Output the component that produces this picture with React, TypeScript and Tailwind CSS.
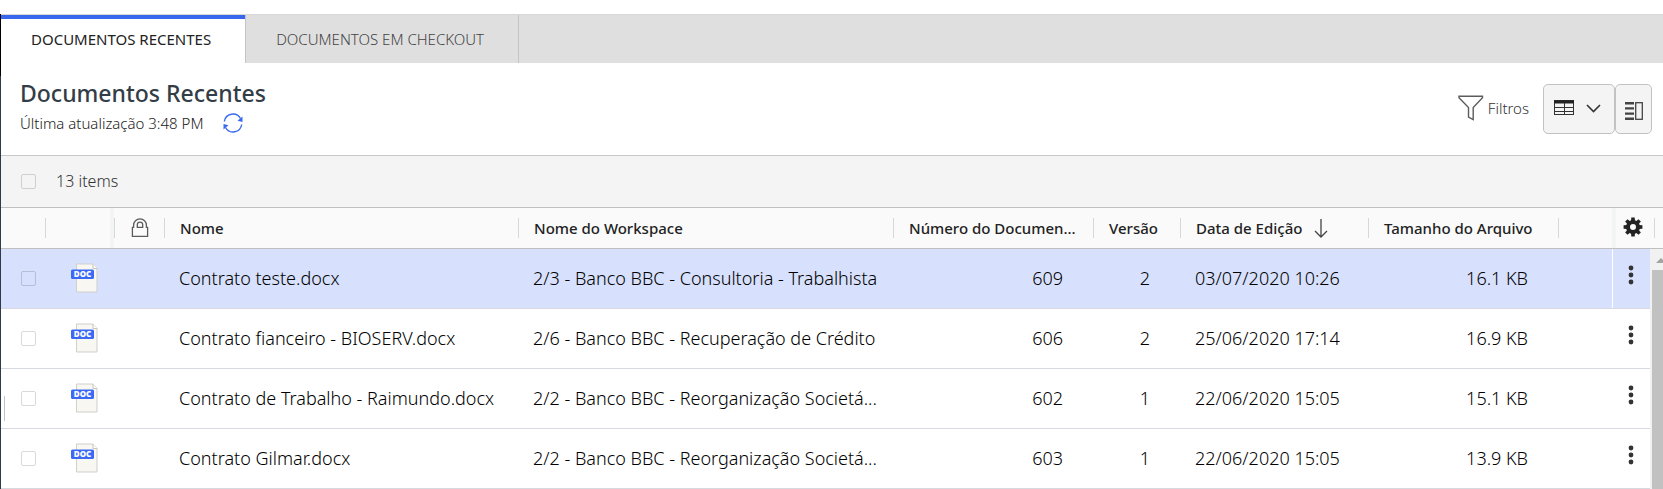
import type { ReactNode } from 'react';

const rows = [
  { name: 'Contrato teste.docx', workspace: '2/3 - Banco BBC - Consultoria - Trabalhista', number: 609, version: 2, edited: '03/07/2020 10:26', size: '16.1 KB', selected: true },
  { name: 'Contrato fianceiro - BIOSERV.docx', workspace: '2/6 - Banco BBC - Recuperação de Crédito', number: 606, version: 2, edited: '25/06/2020 17:14', size: '16.9 KB', selected: false },
  { name: 'Contrato de Trabalho - Raimundo.docx', workspace: '2/2 - Banco BBC - Reorganização Societá...', number: 602, version: 1, edited: '22/06/2020 15:05', size: '15.1 KB', selected: false },
  { name: 'Contrato Gilmar.docx', workspace: '2/2 - Banco BBC - Reorganização Societá...', number: 603, version: 1, edited: '22/06/2020 15:05', size: '13.9 KB', selected: false },
];

function Checkbox({ label }: { label: string }) {
  return (
    <input
      type="checkbox"
      aria-label={label}
      className="block size-[15px] appearance-none rounded-xs border border-black/15 checked:bg-[#3867ee]"
    />
  );
}

function RefreshIcon() {
  return (
    <svg width="20" height="20" viewBox="0 0 20 20" fill="none" stroke="#3b69f0" strokeWidth="1.4">
      <path d="M1.300 8.500A8.700 8.700 0 0 1 17.500 5.500" />
      <path d="M18.700 11.500A8.700 8.700 0 0 1 2.500 14.500" />
      <path d="M19.500 3.500V9L14.500 7.800Z" fill="#3b69f0" stroke="none" />
      <path d="M0.500 16.500V11L5.500 12.200Z" fill="#3b69f0" stroke="none" />
    </svg>
  );
}

function FilterIcon() {
  return (
    <svg width="26" height="26" viewBox="0 0 26 26" fill="none" stroke="#5c5c5c" strokeWidth="1.4">
      <path d="M1 1.200H24.500V2.700L15.200 12.500V24.600L10.500 22V12.500L1 2.700Z" />
    </svg>
  );
}

function GridIcon() {
  return (
    <svg width="20" height="16" viewBox="0 0 20 16" fill="none" stroke="#333">
      <rect x="0.5" y="0.5" width="19" height="14" />
      <path d="M0 3.500V0.500H20V3.500Z" fill="#222" stroke="none" />
      <path d="M0 7.500H20M0 11.500H20M10.500 3V15" />
    </svg>
  );
}

function PanelIcon() {
  return (
    <svg width="18" height="18" viewBox="0 0 18 18" fill="none" stroke="#444">
      <path d="M0 1.200H9M0 6.400H9M0 11.600H9M0 16.800H9" strokeWidth="2.400" />
      <rect x="10.700" y="0.700" width="6.600" height="16.600" strokeWidth="1.300" />
    </svg>
  );
}

function LockIcon() {
  return (
    <svg width="18" height="20" viewBox="0 0 18 20" fill="none" stroke="#5c5c5c" strokeWidth="1.300">
      <path d="M2.600 9.300V7.200a6.200 6.200 0 0 1 12.800 0V9.300H16.600V18.400H1.400V9.300Z" />
      <path d="M6.300 9.300V6.800a2.700 2.700 0 0 1 5.400 0V9.300Z" />
    </svg>
  );
}

function SortIcon() {
  return (
    <svg width="14" height="19" viewBox="0 0 14 19" fill="none" stroke="#444" strokeWidth="1.300">
      <path d="M7 0V18M1 12L7 18L13 12" />
    </svg>
  );
}

function GearIcon() {
  return (
    <svg width="20" height="20" viewBox="0 0 20 20">
      <g fill="#222">
        <path fillRule="evenodd" d="M10 3a7 7 0 1 0 0 14a7 7 0 0 0 0-14ZM10 7a3 3 0 1 1 0 6a3 3 0 0 1 0-6Z" />
        {[0, 45, 90, 135, 180, 225, 270, 315].map((angle) => (
          <path key={angle} d="M8 4.500L8.300 0.600H11.700L12 4.500Z" transform={`rotate(${angle} 10 10)`} />
        ))}
      </g>
    </svg>
  );
}

function DocIcon() {
  return (
    <svg width="28" height="30" viewBox="0 0 28 30" role="img" aria-label="Documento DOC">
      <path d="M5.500 1H22L26 5.500V29H5.500Z" fill="#f8f7f2" stroke="#cfcfcb" />
      <path d="M22 1V5.500H26" fill="#fff" stroke="#c4c4c0" />
      <rect x="0" y="6.500" width="23" height="9.500" rx="1.500" fill="#3b69f5" />
      <text x="11.500" y="14.300" textAnchor="middle" fontSize="8" className="fill-white font-['Open_Sans'] font-extrabold">DOC</text>
    </svg>
  );
}

function MoreIcon() {
  return (
    <svg width="6" height="20" viewBox="0 0 6 20" fill="#333">
      <circle cx="3" cy="3" r="2.400" />
      <circle cx="3" cy="10" r="2.400" />
      <circle cx="3" cy="17" r="2.400" />
    </svg>
  );
}

function HeaderCell({ children, className = '' }: { children?: ReactNode; className?: string }) {
  return (
    <th scope="col" className="border-b border-[#bfbfbf] p-0 text-left font-medium">
      <div className="flex h-10 items-center">
        <div className={`min-w-0 flex-1 whitespace-nowrap ${className}`}>{children}</div>
        <span className="h-5 w-px shrink-0 bg-[#d5d8dc]" />
      </div>
    </th>
  );
}

export default function App() {
  return (
    <div className="bg-white pt-3.5 font-['Noto_Sans','Open_Sans',sans-serif] text-[#111]">
      <div className="flex">
        <div className="flex w-px shrink-0 flex-col bg-[#2f3b4a]">
          <span className="h-[62px] bg-black" />
        </div>
        <main className="min-w-0 flex-1">
          <nav className="flex h-[49px] border-t border-[#d8d8d8] bg-[#dfdfdf] text-[15px]" role="tablist">
            <button role="tab" aria-selected="true" className="border-t-4 border-[#3867ee] bg-white pr-[34px] pb-1 pl-[30px] font-normal text-[#222]">
              DOCUMENTOS RECENTES
            </button>
            <button role="tab" aria-selected="false" className="border-x border-[#c4c4c4] pr-[34px] pl-[30px] font-[350] text-[#444]">
              DOCUMENTOS EM CHECKOUT
            </button>
          </nav>

          <header className="flex h-[93px] items-start justify-between border-b border-[#c8c8c8] pr-[11px] pl-[19px]">
            <div className="pt-[15px]">
              <h1 className="text-[23px] leading-[31px] font-medium text-[#333d47]">Documentos Recentes</h1>
              <div className="flex h-7 items-center gap-5 text-[15px] font-[350] text-[#222]">
                <span>Última atualização 3:48 PM</span>
                <button aria-label="Atualizar"><RefreshIcon /></button>
              </div>
            </div>
            <div className="flex items-center pt-[21px]">
              <button className="mr-3.5 flex items-center gap-1 pb-0.5 text-[15px] font-[350] text-[#333]">
                <FilterIcon />
                Filtros
              </button>
              <button aria-label="Modo de exibição" className="flex h-[50px] w-[72px] items-center gap-3 rounded-[5px] border border-[#c2c2c2] bg-[#f4f4f4] pb-0.5 pl-2.5">
                <GridIcon />
                <svg width="15" height="9" viewBox="0 0 15 9" fill="none" stroke="#333" strokeWidth="1.600"><path d="M1 1L7.500 7.500L14 1" /></svg>
              </button>
              <button aria-label="Painel de detalhes" className="flex h-[50px] w-[37px] items-center justify-center rounded-[5px] border border-[#c2c2c2] bg-[#f4f4f4] pt-1">
                <PanelIcon />
              </button>
            </div>
          </header>

          <div className="flex h-[52px] items-center gap-5 border-b border-[#bfbfbf] bg-[#f4f4f4] pl-5 font-[350] text-[#333]">
            <Checkbox label="Selecionar todos" />
            <span className="pb-0.5">13 items</span>
          </div>

          <div className="relative">
            <table className="w-full table-fixed border-separate border-spacing-0">
              <colgroup>
                <col className="w-[45px]" />
                <col className="w-[69px]" />
                <col className="w-[50px]" />
                <col className="w-[354px]" />
                <col className="w-[375px]" />
                <col className="w-[200px]" />
                <col className="w-[87px]" />
                <col className="w-[188px]" />
                <col className="w-[190px]" />
                <col />
                <col className="w-[51px]" />
              </colgroup>
              <thead className="bg-[#fafafa] text-[15px] text-[#222]">
                <tr>
                  <HeaderCell />
                  <HeaderCell className="h-full border-r-4 border-[#f3f4f4]" />
                  <HeaderCell className="pl-4"><LockIcon /></HeaderCell>
                  <HeaderCell className="pl-[15px]">Nome</HeaderCell>
                  <HeaderCell className="pl-[15px]">Nome do Workspace</HeaderCell>
                  <HeaderCell className="pl-[15px]">Número do Documen...</HeaderCell>
                  <HeaderCell className="pl-[15px]">Versão</HeaderCell>
                  <HeaderCell className="flex items-center gap-3 pl-[15px]">Data de Edição <SortIcon /></HeaderCell>
                  <HeaderCell className="pl-[15px]">Tamanho do Arquivo</HeaderCell>
                  <th className="border-b border-[#bfbfbf] p-0" />
                  <th scope="col" className="border-b border-[#bfbfbf] p-0">
                    <div className="flex h-10 items-center justify-between border-l-4 border-[#f3f4f4] pr-2 pl-[7px]">
                      <button aria-label="Configurar colunas" className="pb-0.5"><GearIcon /></button>
                      <span className="h-5 w-px bg-[#d5d8dc]" />
                    </div>
                  </th>
                </tr>
              </thead>
              <tbody className="text-[18px] font-light text-black">
                {rows.map((row) => (
                  <tr
                    key={row.number}
                    className={`[&>td]:h-[60px] [&>td]:border-b [&>td]:border-[#d6d9de] [&>td]:p-0 ${row.selected ? 'bg-[#d7e0fc]' : 'bg-white'}`}
                  >
                    <td><div className="pl-5"><Checkbox label={`Selecionar ${row.name}`} /></div></td>
                    <td><div className="pb-0.5 pl-[25px]"><DocIcon /></div></td>
                    <td />
                    <td><div className="truncate pl-3.5">{row.name}</div></td>
                    <td><div className="truncate pl-3.5">{row.workspace}</div></td>
                    <td><div className="pr-[31px] text-right">{row.number}</div></td>
                    <td><div className="pr-[31px] text-right">{row.version}</div></td>
                    <td><div className="pl-3.5">{row.edited}</div></td>
                    <td><div className="pr-[31px] text-right">{row.size}</div></td>
                    <td />
                    <td>
                      <div className="flex h-full items-center border-l border-white pb-2 pl-[15px]">
                        <button aria-label={`Ações de ${row.name}`}><MoreIcon /></button>
                      </div>
                    </td>
                  </tr>
                ))}
              </tbody>
            </table>
            <span aria-hidden="true" className="absolute bottom-[68px] left-[3px] h-[25px] w-px bg-[#c4c4c4]" />
            <div aria-hidden="true" className="absolute top-[41px] right-0 bottom-0 flex w-[13px] flex-col overflow-hidden bg-[#f1f1f1] pl-0.5">
              <svg className="h-[21px] shrink-0" width="17" height="21" viewBox="0 0 17 21" fill="#a3a3a3"><path d="M4 14L9 9L14 14Z" /></svg>
              <span className="flex-1 bg-[#c1c1c1]" />
            </div>
          </div>
        </main>
      </div>
    </div>
  );
}
